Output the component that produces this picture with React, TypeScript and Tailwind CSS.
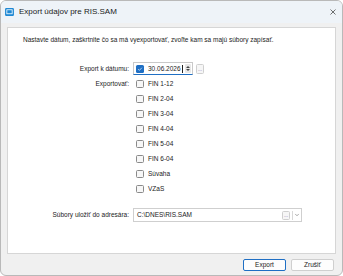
import { ChevronDown } from 'lucide-react'

const items = [
  'FIN 1-12',
  'FIN 2-04',
  'FIN 3-04',
  'FIN 4-04',
  'FIN 5-04',
  'FIN 6-04',
  'Súvaha',
  'VZaS',
]

function Box({ checked }: { checked?: boolean }) {
  return checked ? (
    <span className="flex h-[8px] w-[8px] items-center justify-center rounded-[1.5px] bg-[#1f6fc4]">
      <svg viewBox="0 0 8 8" className="h-[6px] w-[6px]">
        <path d="M1.5 4.2 L3.2 5.8 L6.5 2.3" fill="none" stroke="#fff" strokeWidth="0.9" />
      </svg>
    </span>
  ) : (
    <span className="h-[8px] w-[8px] rounded-[1.5px] border border-[#8a8a8a] bg-[#f7f7f7]" />
  )
}

export default function App() {
  return (
    <div
      className="flex h-[276px] w-[343px] flex-col overflow-hidden rounded-[6px] border border-[#b9b9b9] bg-[#f0f0f0] text-[6.5px] text-[#1b1b1b]"
      style={{ fontFamily: '"Liberation Sans", Arial, sans-serif' }}
    >
      {/* title bar */}
      <div className="flex h-[22px] shrink-0 items-center bg-[#eef3f8] pr-[6px] pl-[4px]">
        <svg viewBox="0 0 10 9" className="h-[8px] w-[9px]">
          <rect x="0" y="0" width="10" height="9" rx="1.5" fill="#1e88d4" />
          <rect x="2" y="2" width="6" height="4.5" fill="none" stroke="#fff" strokeWidth="0.9" />
        </svg>
        <span className="ml-[5px] text-[8px] text-[#1b1b1b]">Export údajov pre RIS.SAM</span>
        <svg viewBox="0 0 6 6" className="ml-auto h-[6px] w-[6px]">
          <path d="M0.5 0.5 L5.5 5.5 M5.5 0.5 L0.5 5.5" stroke="#333" strokeWidth="0.7" />
        </svg>
      </div>

      <div className="flex flex-1 flex-col px-[6px] pt-[4px] pb-[5px]">
        <div className="flex h-[227px] flex-col border border-[#d6d6d6] bg-white">
          <p className="pt-[7px] pl-[15px] leading-[10px]">
            Nastavte dátum, zaškrtnite čo sa má vyexportovať, zvoľte kam sa majú súbory zapísať.
          </p>

          <div className="mt-[17px] flex items-center">
            <span className="w-[124px] pr-[3px] text-right">Export k dátumu:</span>
            <div className="ml-[1px] flex h-[13px] w-[60px] items-center border border-[#c9c9c9] border-b-[#1f6fc4] pl-[2px]">
              <Box checked />
              <span className="ml-[4px] leading-[10px]">30.06.2026</span>
              <span className="ml-[1px] h-[8px] w-px bg-[#222]" />
              <div className="ml-auto mr-[1px] flex h-[9px] w-[6px] flex-col items-center justify-center gap-[1px] rounded-[1px] bg-[#e8e8e8]">
                <span className="h-0 w-0 border-x-[2px] border-b-[2px] border-x-transparent border-b-[#444]" />
                <span className="h-0 w-0 border-x-[2px] border-t-[2px] border-x-transparent border-t-[#444]" />
              </div>
            </div>
            <div className="ml-[3px] flex h-[10px] w-[8px] items-end justify-center rounded-[1.5px] border border-[#cfcfcf] bg-[#f6f6f6] pb-[1px] text-[5px] leading-[5px] text-[#7a5aa8]">
              ...
            </div>
          </div>

          <div className="mt-[1px] flex">
            <span className="w-[124px] pr-[3px] pt-[3px] text-right leading-[10px]">Exportovať:</span>
            <div className="ml-[4px] flex flex-col">
              {items.map((item) => (
                <div key={item} className="flex h-[15px] items-center gap-[4px]">
                  <Box />
                  <span className="leading-[10px]">{item}</span>
                </div>
              ))}
            </div>
          </div>

          <div className="mt-[12px] flex items-center">
            <span className="w-[124px] pr-[3px] text-right">Súbory uložiť do adresára:</span>
            <div className="ml-[1px] flex h-[14px] w-[169px] items-center border border-[#cfcfcf] pl-[3px] pr-[1px]">
              <span className="leading-[10px]">C:\DNES\RIS.SAM</span>
              <div className="ml-auto flex h-[9px] w-[8px] items-end justify-center rounded-[1.5px] border border-[#cfcfcf] bg-[#f6f6f6] pb-[1px] text-[5px] leading-[5px] text-[#7a5aa8]">
                ...
              </div>
              <div className="ml-[2px] flex h-[9px] w-[8px] items-center justify-center border-l border-[#d8d8d8]">
                <ChevronDown className="h-[6px] w-[6px] text-[#555]" strokeWidth={2} />
              </div>
            </div>
          </div>
        </div>

        <div className="mt-[5px] flex justify-end gap-[5px] pr-[2px]">
          <button className="h-[12px] w-[43px] rounded-[2px] border border-[#1f6fc4] bg-[#fdfdfd] text-[6.5px] leading-[10px]">
            Export
          </button>
          <button className="h-[12px] w-[43px] rounded-[2px] border border-[#cfcfcf] bg-[#fdfdfd] text-[6.5px] leading-[10px]">
            Zrušiť
          </button>
        </div>
      </div>
    </div>
  )
}
